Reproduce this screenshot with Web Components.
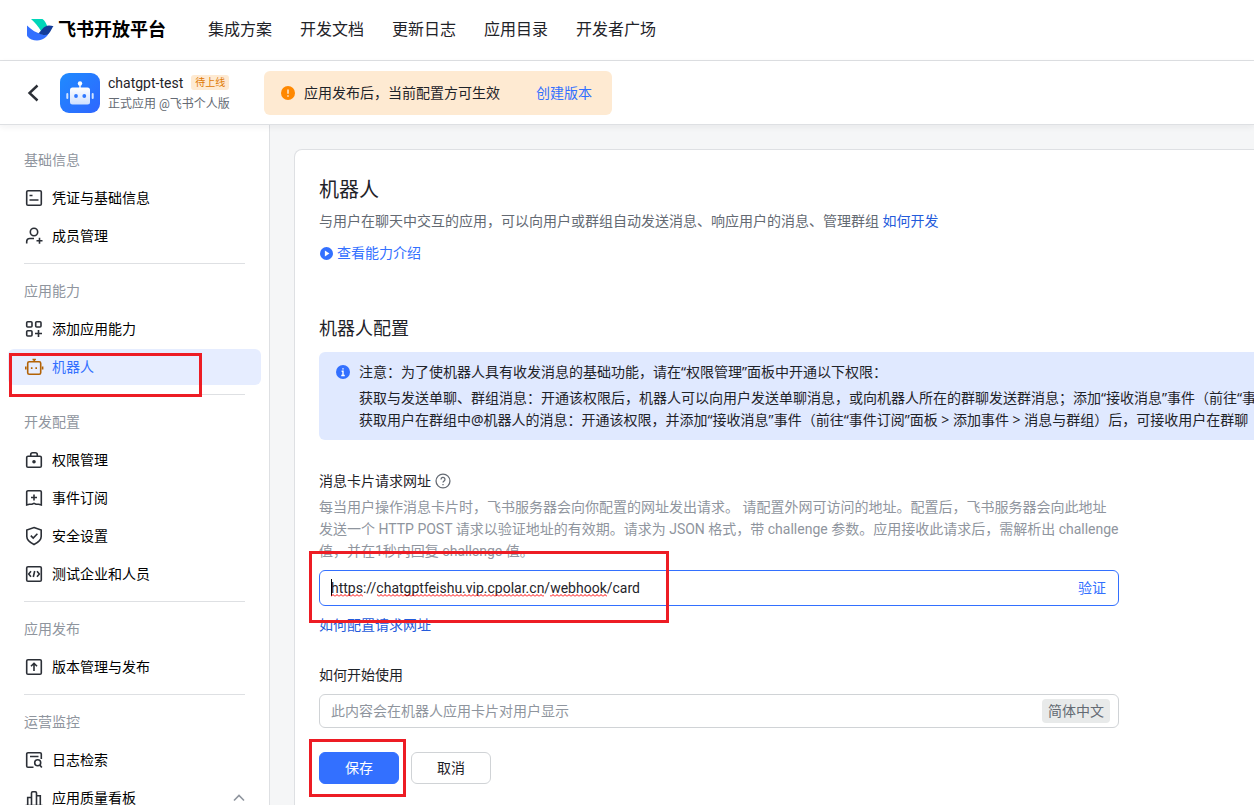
<!DOCTYPE html>
<html lang="zh-CN">
<head>
<meta charset="utf-8">
<meta name="viewport" content="width=device-width, initial-scale=1">
<title>飞书开放平台</title>
<style>
  :root {
    --text: #1f2329; --text-2: #646a73; --text-3: #8f959e; --blue: #3370ff;
    --line: #dee0e3; --field-line: #d0d3d6; --red: #ed1c24;
  }
  html, body { height: 100%; }
  body { margin: 0; overflow: hidden; background: #fff; color: var(--text);
    font: 14px/22px Roboto, "Noto Sans CJK SC", sans-serif; }
</style>
</head>
<body>
<dev-console></dev-console>
<script>
const define = (name, css, html) => {
  const tpl = document.createElement('template');
  tpl.innerHTML = `<style>*{box-sizing:border-box}a{color:inherit;text-decoration:none}button,input{font:inherit}${css}</style>${html}`;
  customElements.define(name, class extends HTMLElement {
    constructor() {
      super();
      this.attachShadow({ mode: 'open' }).append(tpl.content.cloneNode(true));
    }
  });
};

const ICONS = {
  back: '<path d="M13.500 2.500 5.500 10l8 7.500" stroke-width="2.400"/>',
  card: '<rect x="2.700" y="2.700" width="14.600" height="14.600" rx="1.300"/><path d="M5.500 7.500h3M5.500 12h9"/>',
  member: '<circle cx="10" cy="6" r="3.700"/><path d="M2.700 17.500v-2a3 3 0 0 1 3-3h4.300M12.500 14.700h6M15.500 11.700v6"/>',
  grid: '<rect x="2.700" y="2.700" width="5.300" height="5.300" rx="1"/><rect x="11.700" y="2.700" width="5.300" height="5.300" rx="1"/><rect x="2.700" y="11.700" width="5.300" height="5.300" rx="1"/><path d="M11 14.500h7M14.500 11v7"/>',
  robot: '<rect x="3.700" y="4.700" width="13" height="12.600" rx="1.500"/><path d="M10.200 4.500V1.800M8.500 2.500h3.400M1.800 9.500v3M18.600 9.500v3M7.700 10.300v1.700M12.200 10.300v1.700"/>',
  lock: '<rect x="2.700" y="6.200" width="14.600" height="11" rx="1.300"/><path d="M6.700 6V4.700a2 2 0 0 1 2-2h2.600a2 2 0 0 1 2 2V6"/><circle cx="10" cy="11.700" r="1" fill="currentColor"/>',
  event: '<path d="M2.700 17V4a1.300 1.300 0 0 1 1.300-1.300h12A1.300 1.300 0 0 1 17.300 4v13l-2.500-.8H12L10 15.300l-2 .9H5.200z"/><path d="M7 9.500h6M10 6.500v6"/>',
  shield: '<path d="M10 1.500 17.200 4v6.500c0 3.500-3 6-7.200 8-4.200-2-7.200-4.500-7.200-8V4z"/><path d="m6.800 9.600 2.400 2.400 4.200-4.300"/>',
  code: '<rect x="2.700" y="2.700" width="14.600" height="14.600" rx="1.300"/><path d="M7 7.300 4.700 10 7 12.700M13 7.300l2.300 2.700-2.300 2.700M10.700 7l-1.400 6"/>',
  publish: '<rect x="2.700" y="2.700" width="14.600" height="14.600" rx="1.300"/><path d="M10 14V6.500M7 9.300l3-3 3 3"/>',
  log: '<path d="M17.300 9V4A1.300 1.300 0 0 0 16 2.700H4A1.300 1.300 0 0 0 2.700 4v12A1.300 1.300 0 0 0 4 17.300h5.500M6 6.500h8.500"/><circle cx="13.700" cy="12.700" r="3"/><path d="m15.800 15 2 2.500"/>',
  chart: '<path d="M1.500 17.500h17M3.700 17.300V9.500h3.800M7.500 17.300V5a1.200 1.200 0 0 1 1.200-1.200h2.600A1.200 1.200 0 0 1 12.500 5v12.300M12.500 7.700h3.800v9.600"/>',
  up: '<path d="m5 12.500 5-5 5 5"/>',
  help: '<circle cx="10" cy="10" r="8.700"/><path d="M7.500 8a2.500 2.500 0 1 1 3.700 2.200c-.8.500-1.200.9-1.200 1.800M10 13.700v1.600"/>',
  warn: '<circle cx="10" cy="10" r="10" fill="#ff8800" stroke="none"/><path d="M10 5v6M10 13.200v2" stroke="#feead2" stroke-width="2.200"/>',
  info: '<circle cx="10" cy="10" r="10" fill="#3370ff" stroke="none"/><path d="M10 4.500v2M8 9h2v5.500M7.500 15h5" stroke="#fff" stroke-width="2"/>',
  play: '<circle cx="10" cy="10" r="10" fill="#3370ff" stroke="none"/><path d="M7.500 5.500 14.500 10l-7 4.500z" fill="#fff" stroke="none"/>'
};
customElements.define('ui-icon', class extends HTMLElement {
  connectedCallback() {
    if (this.shadowRoot) return;
    this.attachShadow({ mode: 'open' }).innerHTML =
      `<style>:host{display:block;flex:none;width:20px;height:20px}svg{display:block;width:100%;height:100%}</style>
       <svg viewBox="0 0 20 20" fill="none" stroke="currentColor" stroke-width="1.600" aria-hidden="true">${ICONS[this.getAttribute('name')]}</svg>`;
  }
});

/* Red frame laid over a highlighted part of the page. */
define('mark-frame',
  ':host{position:absolute;z-index:2;display:block;box-sizing:border-box;border:3px solid var(--red);pointer-events:none}', '');

define('brand-logo',
  `:host{display:block}
   a{display:flex;align-items:center;gap:4px;font-size:18px;line-height:26px;font-weight:700;color:#000;white-space:nowrap}
   svg{display:block;width:28px;height:24px}`,
  `<a href="#home"><svg viewBox="0 0 28 24" aria-hidden="true">
     <path d="M5 1h11.500c2.500 2 4 4.700 4.800 7.500l-6 5C12.500 8.500 9 4.500 5 1z" fill="#00d6b9"/>
     <path d="M1 7.500c4.500 4.500 9.500 7.500 15.500 9 3 .6 5.300-.5 7-2.700-2 5-6.500 8.700-12.500 8.700-4 0-7.500-1.500-9.500-4-.4-.5-.5-.8-.5-1.500z" fill="#3370ff"/>
     <path d="M12.500 15.200C15.500 13 17.500 7.500 23 7.500c1.700 0 3.200.3 4.500.8-2.500 2.500-3 8.700-8.500 8.700-2.500 0-4.500-.8-6.500-1.800z" fill="#133c9a"/>
   </svg>飞书开放平台</a>`);

define('top-nav',
  `:host{display:flex;align-items:center;gap:42px;height:61px;flex:none;padding:0 26px;border-bottom:1px solid var(--line);box-sizing:border-box}
   nav{display:flex;gap:28px;font-size:16px;line-height:24px;white-space:nowrap}`,
  `<brand-logo></brand-logo>
   <nav aria-label="主导航"><a href="#solutions">集成方案</a><a href="#docs">开发文档</a><a href="#changelog">更新日志</a><a href="#apps">应用目录</a><a href="#community">开发者广场</a></nav>`);

define('publish-banner',
  `:host{display:flex;align-items:center;gap:9px;height:44px;padding:0 20px 0 17px;border-radius:6px;background:#feead2;white-space:nowrap;box-sizing:border-box}
   ui-icon{width:14px;height:14px}
   a{margin-left:27px;color:var(--blue)}`,
  `<ui-icon name="warn"></ui-icon><slot></slot><a href="#create-version">创建版本</a>`);

define('app-bar',
  `:host{position:relative;z-index:1;display:flex;align-items:center;height:64px;flex:none;padding:0 24px;background:#fff;border-bottom:1px solid var(--line);box-shadow:0 2px 6px #1f232910;box-sizing:border-box}
   button{display:block;padding:0;border:0;background:none;color:#2b2f36}
   .app{width:40px;height:40px;margin:0 8px 0 16px}
   .name{display:flex;align-items:center;gap:8px}
   .tag{padding:0 4px;border-radius:3px;background:#feead2;color:#de7802;font-size:10px;line-height:15px}
   .sub{font-size:12px;line-height:20px;color:var(--text-2)}
   .who{width:156px;white-space:nowrap}`,
  `<button type="button" aria-label="返回"><ui-icon name="back"></ui-icon></button>
   <svg class="app" viewBox="0 0 40 40" aria-hidden="true">
     <defs><linearGradient id="bg" x1="0" y1="0" x2="1" y2="1"><stop stop-color="#1f8bff"/><stop offset="1" stop-color="#2f66ff"/></linearGradient>
     <linearGradient id="face" x1="0" y1="0" x2="0" y2="1"><stop stop-color="#fff"/><stop offset="1" stop-color="#cfe0ff"/></linearGradient></defs>
     <rect width="40" height="40" rx="9" fill="url(#bg)"/>
     <circle cx="20" cy="10.500" r="2.200" fill="#fff"/><path d="M19.300 11h1.400v4h-1.400z" fill="#fff"/>
     <rect x="10" y="14.500" width="20" height="17" rx="2.500" fill="url(#face)"/>
     <rect x="6.300" y="20" width="2" height="6" rx="1" fill="#cfe2ff"/><rect x="31.700" y="20" width="2" height="6" rx="1" fill="#cfe2ff"/>
     <circle cx="16" cy="23" r="1.900" fill="#2f78ff"/><circle cx="24.300" cy="23" r="1.900" fill="#2f78ff"/>
   </svg>
   <div class="who"><div class="name">chatgpt-test<span class="tag">待上线</span></div><div class="sub">正式应用 @飞书个人版</div></div>
   <publish-banner>应用发布后，当前配置方可生效</publish-banner>`);

define('side-group',
  `:host{display:flex;flex-direction:column;gap:2px;padding:9px 0;position:relative}
   h2{margin:0;padding:0 16px;font-size:14px;line-height:36px;font-weight:400;color:var(--text-3)}
   hr{width:auto;height:1px;margin:7px 16px -9px;border:0;background:var(--line)}`,
  `<h2><slot name="title"></slot></h2><slot></slot><hr>`);

customElements.define('side-item', class extends HTMLElement {
  connectedCallback() {
    if (this.shadowRoot) return;
    const active = this.hasAttribute('active');
    this.attachShadow({ mode: 'open' }).innerHTML = `<style>
      :host{display:block;position:relative}
      a{display:flex;align-items:center;gap:8px;height:36px;padding:0 12px 0 16px;border-radius:6px;color:#000;text-decoration:none}
      ui-icon{color:#2b2f36}
      a[aria-current]{background:#e6edff;color:var(--blue)}
      a[aria-current] ui-icon{color:#b26206}
      .fold{width:20px;margin-left:auto;color:var(--text-3)}
      mark-frame{top:4px;left:1px;width:193px;height:44px}</style>
      <a href="#${this.getAttribute('icon')}"${active ? ' aria-current="page"' : ''}><ui-icon name="${this.getAttribute('icon')}"></ui-icon><slot></slot>
      ${this.hasAttribute('foldable') ? '<ui-icon class="fold" name="up"></ui-icon>' : ''}</a>
      ${active ? '<mark-frame></mark-frame>' : ''}`;
  }
});

define('side-bar',
  `:host{display:block;flex:none;width:270px;padding:8px;background:#fff;border-right:1px solid var(--line);overflow:hidden;box-sizing:border-box}`,
  `<nav aria-label="应用菜单">
   <side-group><span slot="title">基础信息</span><side-item icon="card">凭证与基础信息</side-item><side-item icon="member">成员管理</side-item></side-group>
   <side-group><span slot="title">应用能力</span><side-item icon="grid">添加应用能力</side-item><side-item icon="robot" active>机器人</side-item></side-group>
   <side-group><span slot="title">开发配置</span><side-item icon="lock">权限管理</side-item><side-item icon="event">事件订阅</side-item><side-item icon="shield">安全设置</side-item><side-item icon="code">测试企业和人员</side-item></side-group>
   <side-group><span slot="title">应用发布</span><side-item icon="publish">版本管理与发布</side-item></side-group>
   <side-group><span slot="title">运营监控</span><side-item icon="log">日志检索</side-item><side-item icon="chart" foldable>应用质量看板</side-item></side-group>
   </nav>`);

define('info-notice',
  `:host{display:flex;gap:9px;padding:9px 17px;border-radius:6px;background:#e0e9ff;white-space:nowrap;font-family:"Noto Sans","Noto Sans CJK SC",sans-serif}
   ui-icon{width:14px;height:14px;margin-top:4px}
   p{margin:0 0 4px}ul{margin:0;padding:0;list-style:none}`,
  `<ui-icon name="info"></ui-icon><div><p>注意：为了使机器人具有收发消息的基础功能，请在“权限管理”面板中开通以下权限：</p>
   <ul><li>获取与发送单聊、群组消息：开通该权限后，机器人可以向用户发送单聊消息，或向机器人所在的群聊发送群消息；添加“接收消息”事件（前往“事</li>
   <li>获取用户在群组中@机器人的消息：开通该权限，并添加“接收消息”事件（前往“事件订阅”面板 &gt; 添加事件 &gt; 消息与群组）后，可接收用户在群聊</li></ul></div>`);

define('callback-field',
  `:host{display:block;position:relative;max-width:800px}
   .label{display:flex;align-items:center;gap:4px}
   .label ui-icon{width:16px;height:16px;color:var(--text-2)}
   p{margin:4px 0 8px;color:var(--text-3);white-space:nowrap}
   .box{position:relative;display:flex;align-items:center;height:36px;border:1px solid var(--blue);border-radius:6px;padding:0 12px 0 11px}
   input{flex:1;min-width:0;height:22px;padding:0;border:0;outline:0;background:none;color:var(--text)}
   button{padding:0;border:0;background:none;color:var(--blue)}
   .link{display:block;width:max-content;margin-top:8px;color:#245bdb}
   .caret{position:absolute;left:11px;top:8px;width:1px;height:17px;background:#000}
   svg{position:absolute;left:11px;top:23px;width:306px;height:3px}
   mark-frame{left:-10px;bottom:13px;width:360px;height:72px}`,
  `<div class="label"><label for="url">消息卡片请求网址</label><ui-icon name="help"></ui-icon></div>
   <p>每当用户操作消息卡片时，飞书服务器会向你配置的网址发出请求。 请配置外网可访问的地址。配置后，飞书服务器会向此地址<br>发送一个 HTTP POST 请求以验证地址的有效期。请求为 JSON 格式，带 challenge 参数。应用接收此请求后，需解析出 challenge<br>值，并在1秒内回复 challenge 值。</p>
   <div class="box"><input id="url" type="text" spellcheck="false" value="https://chatgptfeishu.vip.cpolar.cn/webhook/card"><button type="button">验证</button>
     <span class="caret"></span>
     <svg viewBox="0 0 306 3" aria-hidden="true"><defs><pattern id="wave" width="4" height="3" patternUnits="userSpaceOnUse"><path d="M0 2.500 2 .5l2 2" fill="none" stroke="#f00"/></pattern></defs>
       <path d="M0 0h32v3H0zM46 0h167v3H46zM219 0h57v3h-57z" fill="url(#wave)"/></svg>
   </div>
   <a class="link" href="#how-to">如何配置请求网址</a><mark-frame></mark-frame>`);

define('guide-field',
  `:host{display:block;max-width:800px}
   label{display:block;margin-bottom:8px}
   .box{display:flex;align-items:center;height:34px;border:1px solid var(--field-line);border-radius:6px;padding:0 8px 0 11px}
   input{flex:1;min-width:0;height:22px;padding:0;border:0;outline:0;background:none}
   input::placeholder{color:var(--text-3);opacity:1}
   button{height:24px;padding:0 6px;border:0;border-radius:4px;background:#e8eaea;color:var(--text-2);line-height:22px}`,
  `<label for="guide">如何开始使用</label><div class="box"><input id="guide" type="text" placeholder="此内容会在机器人应用卡片对用户显示"><button type="button">简体中文</button></div>`);

define('form-actions',
  `:host{display:flex;gap:12px;position:relative}
   button{width:80px;height:32px;padding:0;border:1px solid var(--field-line);border-radius:6px;background:#fff;color:var(--text)}
   .primary{border-color:var(--blue);background:var(--blue);color:#fff}
   mark-frame{left:-10px;top:-13px;width:97px;height:58px}`,
  `<button class="primary" type="submit">保存</button><button type="button">取消</button><mark-frame></mark-frame>`);

define('robot-panel',
  `:host{display:block;min-width:1040px;padding:24px;background:#fff;border:1px solid var(--line);border-bottom:0;border-radius:8px 8px 0 0;box-sizing:border-box}
   h1{margin:0;font-size:20px;line-height:32px;font-weight:400}
   h2{margin:50px 0 8px;font-size:18px;line-height:30px;font-weight:400}
   p{margin:4px 0 10px;color:var(--text-2)}
   p a{color:#245bdb}
   .intro{display:flex;align-items:center;gap:4px;width:max-content;padding-left:1px;color:var(--blue)}
   .intro ui-icon{width:13px;height:13px}
   callback-field{margin-top:30px}
   guide-field{margin:28px 0 24px}`,
  `<h1>机器人</h1><p>与用户在聊天中交互的应用，可以向用户或群组自动发送消息、响应用户的消息、管理群组 <a href="#develop">如何开发</a></p>
   <a class="intro" href="#intro"><ui-icon name="play"></ui-icon>查看能力介绍</a>
   <h2>机器人配置</h2><info-notice></info-notice>
   <callback-field></callback-field><guide-field></guide-field><form-actions></form-actions>`);

define('dev-console',
  `:host{display:flex;flex-direction:column;height:100vh}
   .body{display:flex;flex:1;min-height:0}
   main{flex:1;min-width:0;display:grid;padding:24px 24px 0;overflow:hidden;background:#f5f6f7}`,
  `<top-nav></top-nav><app-bar></app-bar><div class="body"><side-bar></side-bar><main><robot-panel></robot-panel></main></div>`);
</script>
</body>
</html>
